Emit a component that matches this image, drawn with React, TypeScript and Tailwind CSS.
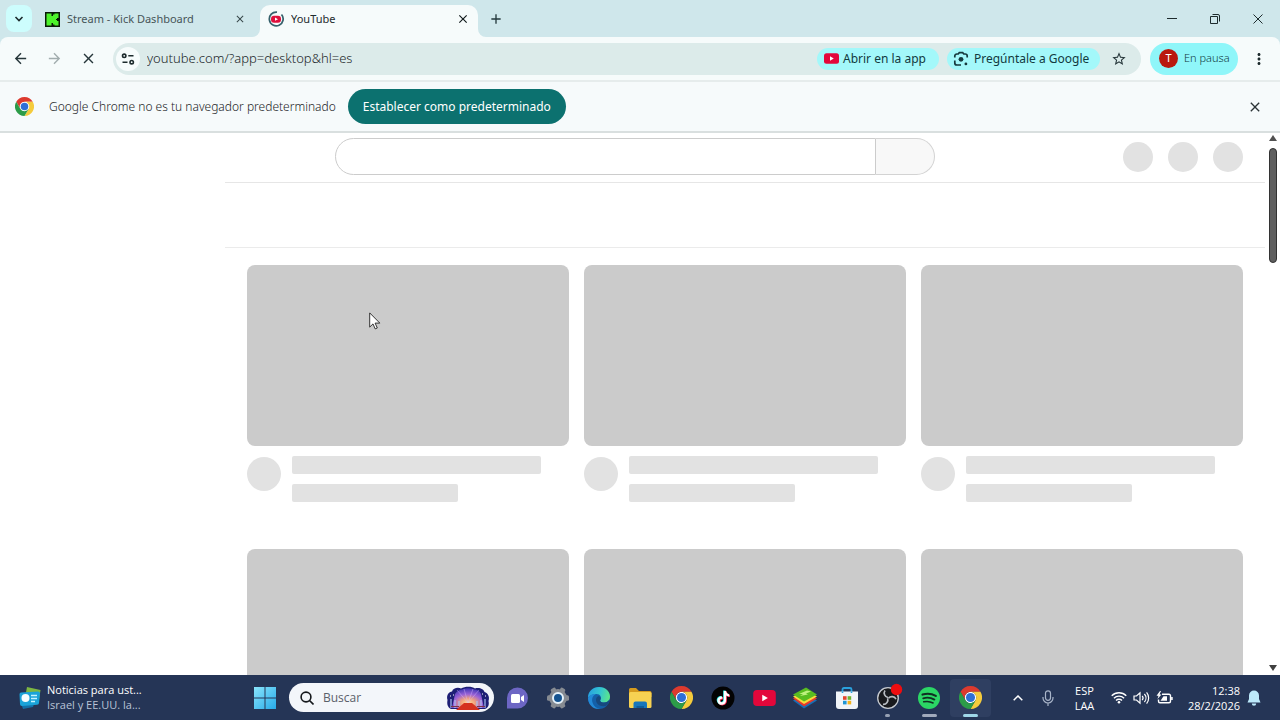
import type { ReactNode } from 'react';
import { MdAdd, MdArrowBack, MdArrowForward, MdClose, MdMoreVert, MdStarBorder } from 'react-icons/md';

function ChromeLogo({ className }: { className: string }) {
  return (
    <svg viewBox="0 0 48 48" className={className} aria-hidden="true">
      <circle cx="24" cy="24" r="12" fill="#fff" />
      <path fill="#dd3a2e" d="M24,12H44.7812a23.9939,23.9939,0,0,0-41.5639.0029L13.6079,30l.0093-.0024A11.9852,11.9852,0,0,1,24,12Z" />
      <path fill="#f5cb3c" d="M34.3913,30.0029,24.0007,48A23.994,23.994,0,0,0,44.78,12.0031H23.9989l-.0025.0093A11.985,11.985,0,0,1,34.3913,30.0029Z" />
      <path fill="#2c9c48" d="M13.6086,30.0031,3.218,12.006A23.994,23.994,0,0,0,24.0025,48L34.3931,30.0029l-.0067-.0068a11.9852,11.9852,0,0,1-20.7778.007Z" />
      <circle cx="24" cy="24" r="9.5" fill="#2f6fd6" />
    </svg>
  );
}

function YouTubeLogo({ className }: { className: string }) {
  return (
    <svg viewBox="0 0 24 17" className={className} aria-hidden="true">
      <rect width="24" height="17" rx="4" fill="#e3073b" />
      <path d="M9.6 5 15.600 8.500 9.6 12Z" fill="#fff" />
    </svg>
  );
}

function KickLogo() {
  return (
    <svg viewBox="0 0 15 15" className="mb-1 size-[15px] shrink-0" aria-hidden="true">
      <rect width="15" height="15" fill="#0a1a08" />
      <path fill="#4df32c" d="M1.500 1.500h5v2.500h1.500v-1.500h1.500v-1h4v4.500h-1.500v1h-1v1h1v1h1.500v4.500h-4v-1h-1.500v-1.500h-1.500v2.500h-5z" />
    </svg>
  );
}

function LoadingFavicon() {
  return (
    <svg viewBox="0 0 16 16" className="mb-1 size-4 shrink-0" fill="none" aria-hidden="true">
      <path d="M13.500 3.500A6.900 6.900 0 1 1 9 1.100" stroke="#35606b" strokeWidth="1.700" />
      <rect x="3" y="4.700" width="10" height="7" rx="3" fill="#df0f3c" />
      <path d="M7 6.600 10 8.200 7 9.800Z" fill="#fff" />
    </svg>
  );
}

function SiteSettingsIcon() {
  return (
    <svg viewBox="0 0 14 12" className="h-3 w-3.5" fill="none" stroke="#1d2b2d" strokeWidth="1.600" aria-hidden="true">
      <circle cx="3.200" cy="2.800" r="1.700" />
      <path d="M7.300 2.800H12.500M1.500 9.200h5" />
      <circle cx="10.700" cy="9.200" r="1.700" />
    </svg>
  );
}

function LensIcon() {
  return (
    <svg viewBox="0 0 16 16" className="size-4 shrink-0" fill="none" stroke="#16393d" strokeWidth="1.700" aria-hidden="true">
      <path d="M1.800 6.500V5a2 2 0 0 1 2-2h1.400L6.300 1.700h3.400L10.800 3h1.400a2 2 0 0 1 2 2v1.500M1.800 9.500V12a2 2 0 0 0 2 2H8" />
      <circle cx="8" cy="8.300" r="2.400" fill="#16393d" stroke="none" />
      <circle cx="12.900" cy="12.900" r="1.400" fill="#16393d" stroke="none" />
    </svg>
  );
}

function TabStrip() {
  return (
    <header className="flex h-[37px] shrink-0 items-end bg-[#cfe7eb] pl-1.5">
      <button aria-label="Buscar pestañas" className="mb-[5px] flex h-[27px] w-[26px] items-center justify-center rounded-lg bg-[#cdfdfd]">
        <svg viewBox="0 0 10 6" className="h-1.5 w-2.5" fill="none" stroke="#1d2b2d" strokeWidth="1.600" aria-hidden="true">
          <path d="M1.500 1 5 4.500 8.500 1" />
        </svg>
      </button>
      <div className="flex h-8 w-[228px] items-center gap-[7px] pr-3.5 pl-[13px] text-[11px] text-[#475558]">
        <KickLogo />
        <span className="flex-1 truncate pb-1">Stream - Kick Dashboard</span>
        <button aria-label="Cerrar Stream - Kick Dashboard" className="mb-1 text-[#37474a]">
          <MdClose className="size-3" />
        </button>
      </div>
      <div className="relative flex h-8 w-[218px] items-center gap-[7px] rounded-t-[10px] bg-[#f6fbfb] pr-2 pl-2 text-[11px] text-[#1f2b2e]">
        <svg viewBox="0 0 8 8" className="absolute bottom-0 -left-2 size-2" aria-hidden="true">
          <path d="M8 0A8 8 0 0 1 0 8H8Z" fill="#f6fbfb" />
        </svg>
        <svg viewBox="0 0 8 8" className="absolute -right-2 bottom-0 size-2" aria-hidden="true">
          <path d="M0 0A8 8 0 0 0 8 8H0Z" fill="#f6fbfb" />
        </svg>
        <LoadingFavicon />
        <span className="flex-1 truncate pb-1">YouTube</span>
        <button aria-label="Cerrar YouTube" className="mb-1 text-[#101a1c]">
          <MdClose className="size-3.5" />
        </button>
      </div>
      <button aria-label="Nueva pestaña" className="mb-2.5 ml-2.5 text-[#25393d]">
        <MdAdd className="size-4" />
      </button>
      <div className="ml-auto flex h-full w-[130px] text-[#1d2b2d]">
        <button aria-label="Minimizar" className="flex flex-1 items-center justify-center">
          <svg viewBox="0 0 10 10" className="size-2.5" stroke="currentColor" aria-hidden="true"><path d="M0 4.500h10" /></svg>
        </button>
        <button aria-label="Restaurar" className="flex flex-1 items-center justify-center">
          <svg viewBox="0 0 10 10" className="size-2.5" fill="none" stroke="currentColor" aria-hidden="true">
            <path d="M.5 2.500h7v7h-7zM2.500.5h5.500a1.500 1.500 0 0 1 1.500 1.500v5.500" />
          </svg>
        </button>
        <button aria-label="Cerrar" className="flex flex-1 items-center justify-center">
          <svg viewBox="0 0 10 10" className="size-2.5" stroke="currentColor" aria-hidden="true"><path d="m.5.5 9 9m0-9-9 9" /></svg>
        </button>
      </div>
    </header>
  );
}

function Toolbar() {
  return (
    <div className="shrink-0 bg-[#cfe7eb]">
      <div className="flex h-[43px] items-center rounded-t-lg bg-[#f6fbfb] pr-3 pl-3">
        <nav className="flex w-[101px] gap-[17px] text-[#26363a]">
          <button aria-label="Atrás"><MdArrowBack className="size-[17px]" /></button>
          <button aria-label="Adelante" className="text-[#a2adae]"><MdArrowForward className="size-[17px]" /></button>
          <button aria-label="Detener"><MdClose className="size-[17px]" /></button>
        </nav>
        <div className="flex h-8 flex-1 items-center rounded-full bg-[#dcebea] pr-3.5 pl-[3px]">
          <button aria-label="Información del sitio" className="flex size-6 items-center justify-center rounded-full bg-[#f7fcfc]">
            <SiteSettingsIcon />
          </button>
          <input
            aria-label="Dirección"
            defaultValue="youtube.com/?app=desktop&hl=es"
            className="ml-[7px] min-w-0 flex-1 bg-transparent text-[13px] font-light text-[#1c282a] outline-none"
          />
          <button className="flex h-[22px] w-[122px] items-center gap-1 rounded-full bg-[#a3f8fa] pl-[7px] text-[12px] whitespace-nowrap text-[#123a40]">
            <YouTubeLogo className="h-[11px] w-[15px] shrink-0" />
            Abrir en la app
          </button>
          <button className="ml-2 flex h-[22px] w-[153px] items-center gap-[5px] rounded-full bg-[#a3f8fa] pl-1.5 text-[12px] whitespace-nowrap text-[#123a40]">
            <LensIcon />
            Pregúntale a Google
          </button>
          <button aria-label="Añadir a marcadores" className="ml-[11px] text-[#26363a]"><MdStarBorder className="size-4" /></button>
        </div>
        <button className="ml-[9px] flex h-8 w-[88px] items-center gap-1.5 rounded-full bg-[#8ff6f9] pl-[9px] text-[11px] font-light whitespace-nowrap text-[#10383d]">
          <span className="flex size-[19px] items-center justify-center rounded-full bg-[#b9190e] font-normal text-white">T</span>
          En pausa
        </button>
        <button aria-label="Menú" className="ml-3 text-[#1d2b2d]"><MdMoreVert className="size-[18px]" /></button>
      </div>
    </div>
  );
}

function DefaultBrowserBar() {
  return (
    <section className="flex h-[53px] shrink-0 items-center border-t-2 border-b-2 border-t-[#e6ecec] border-b-[#d9dfdf] bg-[#f6fafb] pr-[17px] pl-[15px] text-[12px] text-[#1c2427]">
      <ChromeLogo className="size-[19px] shrink-0" />
      <p className="ml-[15px] font-light whitespace-nowrap">Google Chrome no es tu navegador predeterminado</p>
      <button className="ml-3 h-[35px] w-[218px] rounded-full bg-[#0c716f] whitespace-nowrap text-white">
        Establecer como predeterminado
      </button>
      <button aria-label="Cerrar aviso" className="ml-auto text-[#2b3336]"><MdClose className="size-4" /></button>
    </section>
  );
}

function VideoPlaceholder() {
  return (
    <article>
      <div className="aspect-video rounded-lg bg-[#cbcbcb]" />
      <div className="flex gap-[11px] pt-2.5">
        <div className="mt-px size-[34px] shrink-0 rounded-full bg-[#e2e2e2]" />
        <div className="flex flex-1 flex-col gap-2.5">
          <div className="h-[18px] w-[90%] rounded-xs bg-[#e2e2e2]" />
          <div className="h-[18px] w-[60%] rounded-xs bg-[#e2e2e2]" />
        </div>
      </div>
    </article>
  );
}

function Page() {
  return (
    <div className="flex min-h-0 flex-1 bg-white">
      <aside className="w-[225px] shrink-0" />
      <main className="min-w-0 flex-1 overflow-hidden">
        <div className="flex h-[50px] items-center justify-between border-b border-[#e6e6e6] pr-[22px] pb-0.5 pl-[110px]">
          <form className="flex h-[37px] w-[600px]">
            <input aria-label="Buscar en YouTube" className="min-w-0 flex-1 rounded-l-full border border-[#cccccc] bg-white px-4 outline-none" />
            <button aria-label="Buscar" type="button" className="w-[59px] rounded-r-full border border-l-0 border-[#d3d3d3] bg-[#f8f8f8]" />
          </form>
          <div className="flex gap-[15px]">
            <div className="size-[30px] rounded-full bg-[#e2e2e2]" />
            <div className="size-[30px] rounded-full bg-[#e2e2e2]" />
            <div className="size-[30px] rounded-full bg-[#e2e2e2]" />
          </div>
        </div>
        <div className="h-[65px] border-b border-[#ebebeb]" />
        <div className="grid grid-cols-3 gap-x-[15px] gap-y-[47px] pt-[17px] pr-[22px] pl-[22px]">
          {[0, 1, 2, 3, 4, 5].map((n) => <VideoPlaceholder key={n} />)}
        </div>
      </main>
      <div className="flex w-[15px] shrink-0 flex-col items-center pt-0.5 pb-1" aria-hidden="true">
        <svg viewBox="0 0 8 6" className="h-1.5 w-2"><path d="M4 0 8 6H0Z" fill="#505050" /></svg>
        <div className="mt-[7px] h-[115px] w-2 rounded-full border border-[#333333] bg-[#5f5f5f]" />
        <svg viewBox="0 0 8 6" className="mt-auto h-1.5 w-2"><path d="M0 0H8L4 6Z" fill="#404040" /></svg>
      </div>
    </div>
  );
}

function NewsIcon() {
  return (
    <svg viewBox="0 0 24 24" className="size-6 shrink-0" aria-hidden="true">
      <path d="M9 1 22.500 4 21 14 7 12Z" fill="#7db742" />
      <path d="M3 17 16 18 15 21 5 23Z" fill="#1370a8" />
      <path d="M3 6.500 20 5.500Q22 5.500 22 7.500L21 17Q21 18.500 19 18.700L4 20Q2 20 2 18L1.500 8.500Q1.500 6.600 3 6.500Z" fill="#1aa3d9" />
      <circle cx="7.500" cy="12" r="4" fill="#f5fdff" />
      <path d="M13 9.500h6M13 12.500h6M13 15.500h4" stroke="#c5f4ff" strokeWidth="1.500" />
    </svg>
  );
}

function SearchArt() {
  return (
    <svg viewBox="0 0 44 24" className="h-6 w-11" aria-hidden="true">
      <defs>
        <radialGradient id="glow" cx="50%" cy="75%" r="75%">
          <stop offset="0" stopColor="#ffdf9a" />
          <stop offset=".3" stopColor="#f0a07c" />
          <stop offset=".6" stopColor="#9a62d6" />
          <stop offset="1" stopColor="#3d35b4" />
        </radialGradient>
      </defs>
      <path d="M5 23C1 21 1 17 1.500 14 0 9 3 6 6 5.500 7 2 12 1 15 2.500 19 0 26 0 29 2.500 33 1 38 3 38.500 6 42 7 44 11 42.500 15 43.500 19 42 22 39 23Z" fill="#1d1f75" />
      <path d="M6 22 9 8Q12 3.500 16 3.500 22 1 28 3.500 33 3 35 8l3 14Z" fill="url(#glow)" />
      <path d="M22 17 11 4M22 17 18 3M22 17 27 3M22 17 33 4" stroke="#d9b9ff" strokeWidth=".7" opacity=".6" />
      <path d="M18 17h8l8 7H10Z" fill="#d5321f" />
      <path d="M5 13v9M9 14v8M13 15v5M31 15v5M35 14v8M39 13v9" stroke="#a9bdf2" strokeWidth="1.200" />
      <path d="M5 20.500h8M31 20.500h8" stroke="#7a3348" strokeWidth="1" />
      <path d="M7 9h1M36 8h1M39 10h1M4 10h1" stroke="#fff" />
    </svg>
  );
}

function ChatIcon() {
  return (
    <svg viewBox="0 0 24 24" className="size-6" aria-hidden="true">
      <path d="M12.500 1.500a10.500 10.500 0 1 1 0 21H2V12A10.500 10.500 0 0 1 12.500 1.500Z" fill="#6d66c4" />
      <rect x="6" y="8" width="9" height="9" rx="1.500" fill="#fff" />
      <path d="m16 11 3-2v7l-3-2Z" fill="#fff" />
    </svg>
  );
}

function SettingsIcon() {
  return (
    <svg viewBox="0 0 24 24" className="size-6" aria-hidden="true">
      <g fill="#868b92">
        <circle cx="12" cy="12" r="9" />
        <rect x="9.300" y="1" width="5.400" height="22" rx="1.500" transform="rotate(30 12 12)" />
        <rect x="9.300" y="1" width="5.400" height="22" rx="1.500" transform="rotate(90 12 12)" />
        <rect x="9.300" y="1" width="5.400" height="22" rx="1.500" transform="rotate(150 12 12)" />
      </g>
      <circle cx="12" cy="12" r="5" fill="#145390" stroke="#e4f1fa" strokeWidth="2" />
    </svg>
  );
}

function EdgeIcon() {
  return (
    <svg viewBox="0 0 24 24" className="size-6" aria-hidden="true">
      <defs>
        <linearGradient id="edge-top" x1="0" x2="1" y1=".3" y2=".5">
          <stop offset="0" stopColor="#27a0e0" />
          <stop offset=".55" stopColor="#35c6cf" />
          <stop offset="1" stopColor="#5ce58a" />
        </linearGradient>
      </defs>
      <circle cx="12" cy="12" r="11" fill="#145fa8" />
      <path d="M1 12C1 5 6 1 12 1c7 0 11 5 11 9.500 0 4-3 6-6 6-3.500 0-4.500-1.600-3.500-3 1.200-2 0-5.500-4-5.500C5.500 8 2 10 1 12Z" fill="url(#edge-top)" />
      <path d="M1 12C2.500 8.500 6 7.600 9 8c-3.500 1.500-4.500 5-3.500 8.500 1 3.700 4 6 7.500 6.500C6 23.500 1 18.500 1 12Z" fill="#2389d7" />
      <path d="M13.500 13.500c-1 1.400 0 3 3.500 3 2.400 0 4.400-1.100 5.400-3A11 11 0 0 1 20.500 19c-5 3-11.500 0-11.500-5 0-2 1-3.300 2.500-4 1.700.4 2.700 2 2 3.500Z" fill="#17497f" />
    </svg>
  );
}

function FolderIcon() {
  return (
    <svg viewBox="0 0 24 24" className="size-6" aria-hidden="true">
      <path d="M1 3.500Q1 2 2.500 2H8l3 3h11Q23.500 5 23.500 6.500V11H1Z" fill="#d69b1d" />
      <rect x="1" y="6" width="22.500" height="16" rx="1.500" fill="#f7d252" />
      <path d="M5.500 22v-4.500q0-2 2-2h9.500q2 0 2 2V22Z" fill="#1776bb" />
      <path d="M8.500 22v-2h7.500v2Z" fill="#0e5b98" />
    </svg>
  );
}

function TikTokIcon() {
  const note = 'M12.800 5h2.300c.2 1.900 1.300 3 3.100 3.200v2.300c-1.200 0-2.200-.4-3.100-1v4.700c0 5.700-8 6.200-8.700 1-.4-3 2-5 4.800-4.700v2.400c-1.500-.3-2.600.6-2.400 1.900.3 2.100 4 1.900 4-.9Z';
  return (
    <svg viewBox="0 0 24 24" className="size-6" aria-hidden="true">
      <circle cx="12" cy="12" r="11.500" fill="#030303" />
      <path d={note} fill="#25f4ee" transform="translate(-.6 -.4)" />
      <path d={note} fill="#fe2c55" transform="translate(.8 .6)" />
      <path d={note} fill="#fff" />
    </svg>
  );
}

function BlueStacksIcon() {
  return (
    <svg viewBox="0 0 26 24" className="h-6 w-[26px]" aria-hidden="true">
      <path d="M1 14.500 12 22.500 25 14.500 14 8Z" fill="#176fb5" />
      <path d="M1 12.500 12 20.500 25 12.500 14 6Z" fill="#e53a2b" />
      <path d="M1 10.500 12 18 25 10.500 14 4Z" fill="#f8dc3c" />
      <path d="M1 8.500 14 1.500 25 8.500 12 15.500Z" fill="#58bd20" />
      <path d="m7 8 8-3.500 4 1-5 2 2 1-8 1.500 3-2Z" fill="#bdf17e" />
    </svg>
  );
}

function StoreIcon() {
  return (
    <svg viewBox="0 0 24 24" className="size-6" aria-hidden="true">
      <path d="M7.500 7V3.500Q7.500 2 9 2h6q1.500 0 1.500 1.500V7" fill="none" stroke="#2aa1dd" strokeWidth="1.800" />
      <path d="M1 5.500H23V20q0 3-3 3H4q-3 0-3-3Z" fill="#f1f4f8" />
      <path d="M7.500 5.500v1.500M16.500 5.500v1.500" stroke="#2aa1dd" strokeWidth="1.600" />
      <path d="M8 10.200h3.600v3.600H8Z" fill="#e5442b" />
      <path d="M12.600 10.200h3.600v3.600h-3.600Z" fill="#6fb32d" />
      <path d="M8 14.800h3.600v3.600H8Z" fill="#1e95d5" />
      <path d="M12.600 14.800h3.600v3.600h-3.600Z" fill="#f4b21b" />
    </svg>
  );
}

function ObsIcon() {
  return (
    <svg viewBox="0 0 28 28" className="mb-1 ml-1 size-7" aria-hidden="true">
      <circle cx="12" cy="16" r="10.300" fill="#191a1d" stroke="#c6cad0" strokeWidth="1.300" />
      <g fill="none" stroke="#b9bdc2" strokeWidth="1.600">
        <path d="M9 8.500c-2 3 0 6.500 3 7" />
        <path d="M9 8.500c-2 3 0 6.500 3 7" transform="rotate(120 12 16)" />
        <path d="M9 8.500c-2 3 0 6.500 3 7" transform="rotate(240 12 16)" />
      </g>
      <circle cx="20.500" cy="7.500" r="5.700" fill="#ee0d10" />
    </svg>
  );
}

function SpotifyIcon() {
  return (
    <svg viewBox="0 0 24 24" className="size-6" aria-hidden="true">
      <circle cx="12" cy="12" r="11" fill="#2bd765" />
      <g fill="none" stroke="#102f22" strokeLinecap="round">
        <path d="M5.500 8.600c4.300-1.300 9.400-.9 13.300 1.300" strokeWidth="2.100" />
        <path d="M6.200 12.300c3.700-1 7.900-.6 11.200 1.300" strokeWidth="1.800" />
        <path d="M6.700 15.800c3.300-.8 6.600-.4 9.400 1.200" strokeWidth="1.500" />
      </g>
    </svg>
  );
}

function TaskbarButton({ label, children, indicator, active }: { label: string; children: ReactNode; indicator?: string; active?: boolean }) {
  return (
    <button aria-label={label} className={active ? 'relative flex h-[38px] min-w-0 flex-1 items-center justify-center rounded-sm bg-[#2f3f61]' : 'relative flex h-[38px] min-w-0 flex-1 items-center justify-center'}>
      {children}
      {indicator && <span className={`absolute bottom-0 h-[3px] rounded-full ${indicator}`} />}
    </button>
  );
}

function Taskbar() {
  return (
    <footer className="flex h-[45px] shrink-0 items-center bg-[#253556] font-['Open_Sans','Noto_Sans',sans-serif] text-white">
      <div className="flex flex-1 items-center gap-[5px] pl-[18px] text-[11px] leading-[15px] whitespace-nowrap">
        <NewsIcon />
        <div className="pb-0.5">
          <p>Noticias para ust...</p>
          <p className="text-[#b8c3d6]">Israel y EE.UU. la...</p>
        </div>
      </div>
      <button aria-label="Inicio" className="mr-3">
        <svg viewBox="0 0 24 24" className="size-6" aria-hidden="true">
          <defs>
            <linearGradient id="start" x2="1" y2="1"><stop stopColor="#89e4fb" /><stop offset="1" stopColor="#27aae9" /></linearGradient>
          </defs>
          <path d="M1 1h10.500v10.500H1zM12.500 1H23v10.500H12.500zM1 12.500h10.500V23H1zM12.500 12.500H23V23H12.500z" fill="url(#start)" />
        </svg>
      </button>
      <label className="flex h-[29px] w-[205px] items-center rounded-full bg-[#f3f6fa] pr-1 pl-[11px] text-[#5a6069]">
        <svg viewBox="0 0 14 14" className="size-3.5 shrink-0" fill="none" stroke="#15181c" strokeWidth="1.600" aria-hidden="true">
          <circle cx="6" cy="6" r="4.900" /><path d="m9.500 9.500 4 4" />
        </svg>
        <input aria-label="Buscar" placeholder="Buscar" className="ml-[9px] w-0 min-w-0 flex-1 bg-transparent text-[12px] outline-none placeholder:text-[#5a6069]" />
        <SearchArt />
      </label>
      <nav className="ml-0.5 flex w-[495px] items-center">
        <TaskbarButton label="Chat"><ChatIcon /></TaskbarButton>
        <TaskbarButton label="Configuración"><SettingsIcon /></TaskbarButton>
        <TaskbarButton label="Edge"><EdgeIcon /></TaskbarButton>
        <TaskbarButton label="Explorador de archivos"><FolderIcon /></TaskbarButton>
        <TaskbarButton label="Chrome"><ChromeLogo className="size-[23px]" /></TaskbarButton>
        <TaskbarButton label="TikTok"><TikTokIcon /></TaskbarButton>
        <TaskbarButton label="YouTube"><YouTubeLogo className="h-4 w-[23px]" /></TaskbarButton>
        <TaskbarButton label="BlueStacks"><BlueStacksIcon /></TaskbarButton>
        <TaskbarButton label="Microsoft Store"><StoreIcon /></TaskbarButton>
        <TaskbarButton label="OBS" indicator="w-[5px] bg-[#97a1b3]"><ObsIcon /></TaskbarButton>
        <TaskbarButton label="Spotify" indicator="w-[15px] bg-[#a1aabc]"><SpotifyIcon /></TaskbarButton>
        <TaskbarButton label="Google Chrome" indicator="w-[15px] bg-[#9fd7e8]" active><ChromeLogo className="size-[23px]" /></TaskbarButton>
      </nav>
      <div className="ml-[22px] flex w-[267px] items-center text-[11px] leading-[15px]">
        <button aria-label="Mostrar iconos ocultos">
          <svg viewBox="0 0 10 6" className="h-1.5 w-2.5" fill="none" stroke="#fff" strokeWidth="1.500" aria-hidden="true"><path d="M.7 5.300 5 1l4.300 4.300" /></svg>
        </button>
        <button aria-label="Micrófono" className="ml-[19px]">
          <svg viewBox="0 0 12 16" className="h-4 w-3" fill="none" stroke="#a9b5c9" strokeWidth="1.200" aria-hidden="true">
            <rect x="3.500" y=".8" width="5" height="9.500" rx="2.500" /><path d="M1 7v1a5 5 0 0 0 10 0V7M6 13v3" />
          </svg>
        </button>
        <button className="ml-4 w-[29px] text-center">ESP<br />LAA</button>
        <button aria-label="Red, volumen y batería" className="ml-3 flex items-center gap-1.5">
          <svg viewBox="0 0 16 13" className="h-[13px] w-4" fill="none" stroke="#fff" strokeWidth="1.300" aria-hidden="true">
            <path d="M.7 4.700a10.500 10.500 0 0 1 14.600 0M2.900 7.200a7.300 7.300 0 0 1 10.200 0M5 9.500a4.200 4.200 0 0 1 6 0" />
            <circle cx="8" cy="11.300" r="1.300" fill="#fff" stroke="none" />
          </svg>
          <svg viewBox="0 0 17 14" className="h-3.5 w-[17px]" fill="none" stroke="#fff" strokeWidth="1.200" aria-hidden="true">
            <path d="M1 5h2.500L7 1.800v10.400L3.500 9H1ZM9.200 4.800a3.500 3.500 0 0 1 0 4.400M11.400 3a6 6 0 0 1 0 8M13.600 1.300a9 9 0 0 1 0 11.400" />
          </svg>
          <svg viewBox="0 0 17 14" className="h-3.5 w-[17px]" fill="none" stroke="#fff" strokeWidth="1.400" aria-hidden="true">
            <path d="M6 3.200h7a1.500 1.500 0 0 1 1.500 1.500v5.600a1.500 1.500 0 0 1-1.500 1.500H4a1.500 1.500 0 0 1-1.500-1.500V8.500M16 6v3" />
            <path d="M7.500 5.200h3.500v4.600H4.500Z" fill="#fff" stroke="none" />
            <path d="M4 0 .5 4.700h2L1.500 8 5.500 3.500h-2L5 0Z" fill="#fff" stroke="none" />
          </svg>
        </button>
        <button className="ml-auto text-right whitespace-nowrap">12:38<br />28/2/2026</button>
        <button aria-label="Notificaciones" className="mr-[19px] ml-[7px]">
          <svg viewBox="0 0 14 16" className="h-4 w-3.5" fill="#bce9fb" aria-hidden="true">
            <path d="M7 .5a5 5 0 0 0-5 5V9L.5 12.500h13L12 9V5.500a5 5 0 0 0-5-5ZM4.800 13.500a2.200 2.200 0 0 0 4.400 0Z" />
          </svg>
        </button>
      </div>
    </footer>
  );
}

export default function App() {
  return (
    <div className="relative flex h-screen flex-col overflow-hidden bg-white font-['Noto_Sans','Open_Sans',sans-serif]">
      <TabStrip />
      <Toolbar />
      <DefaultBrowserBar />
      <Page />
      <Taskbar />
      <svg viewBox="0 0 12 18" className="pointer-events-none absolute top-[312px] left-[369px] h-[18px] w-3" aria-hidden="true">
        <path d="M.7.9v14.200l3.300-3.200 2.200 5 2.100-.9-2.200-4.900h4.700Z" fill="#fff" stroke="#222" strokeWidth=".9" />
      </svg>
    </div>
  );
}
